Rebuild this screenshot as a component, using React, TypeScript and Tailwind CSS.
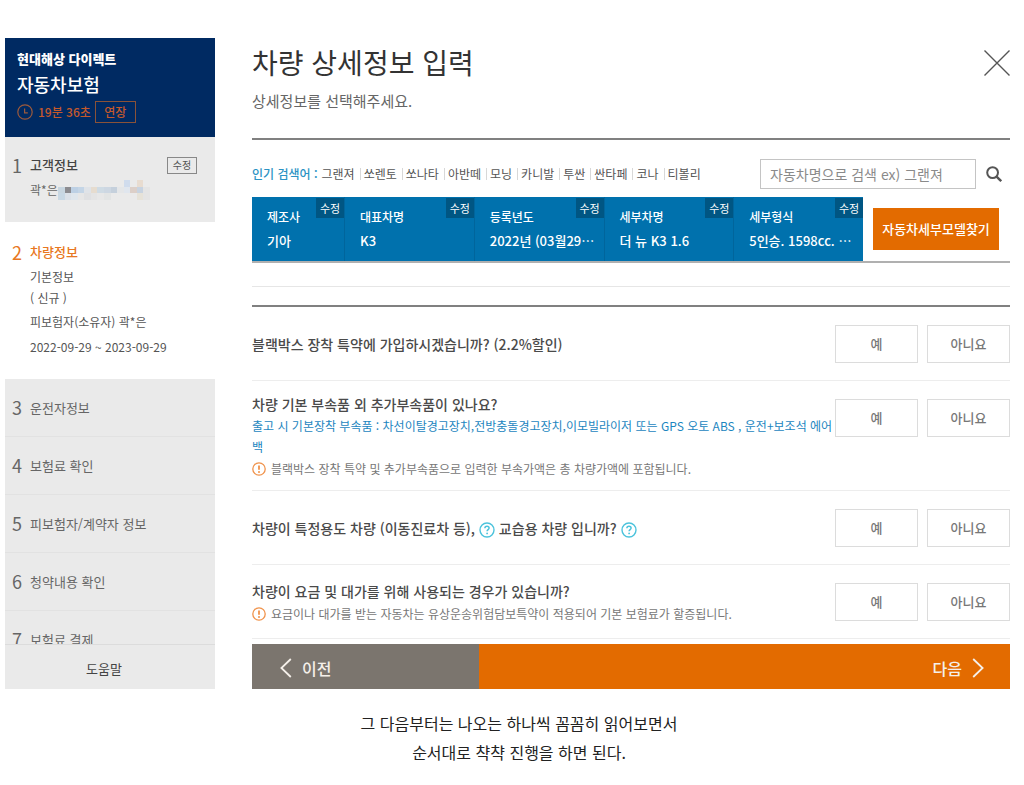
import React, { useState } from 'react';

const popular = ['그랜져', '쏘렌토', '쏘나타', '아반떼', '모닝', '카니발', '투싼', '싼타페', '코나', '티볼리'];

const specs = [
  { label: '제조사', value: '기아' },
  { label: '대표차명', value: 'K3' },
  { label: '등록년도', value: '2022년 (03월29⋯' },
  { label: '세부차명', value: '더 뉴 K3 1.6' },
  { label: '세부형식', value: '5인승. 1598cc. ⋯' },
];

const nextSteps = [
  { no: 3, label: '운전자정보' },
  { no: 4, label: '보험료 확인' },
  { no: 5, label: '피보험자/계약자 정보' },
  { no: 6, label: '청약내용 확인' },
  { no: 7, label: '보험료 결제' },
];

// [column, row, colour] of the masked phone number
const mask: [number, number, string][] = [
  [10, 0, '#d0dced'], [12, 0, '#e8dcd0'],
  [0, 1, '#c8d6e0'], [1, 1, '#8c8c90'], [2, 1, '#bdd0e4'], [3, 1, '#c4d5e6'], [4, 1, '#dfe3e8'],
  [5, 1, '#e6dccf'], [6, 1, '#cfdbe4'], [7, 1, '#cdd7e2'], [8, 1, '#c5d0dc'], [9, 1, '#e4e6e8'],
  [10, 1, '#e0e6ee'], [11, 1, '#dccfc8'], [12, 1, '#c8d3e0'], [13, 1, '#e4e4e4'],
  [0, 2, '#c8d8e4'], [1, 2, '#dbe1e8'], [2, 2, '#dfe6ec'], [3, 2, '#e6e6e6'], [4, 2, '#dfe0e2'],
  [5, 2, '#e4e4e4'], [6, 2, '#e7e7e7'], [7, 2, '#e2e4e4'], [12, 2, '#e6e2d8'], [13, 2, '#e4e4e4'],
];

const HelpIcon = () => (
  <button type="button" aria-label="도움말 보기" className="inline-block align-middle">
    <svg viewBox="0 0 16 16" className="block w-4 h-4" fill="none" stroke="#4cc3dc">
      <circle cx="8" cy="8" r="7" strokeWidth="1.4" />
      <path d="M5.9 6.3c0-1.3.9-2.1 2.1-2.1s2.1.8 2.1 1.9c0 1.5-2 1.6-2 3.2" strokeWidth="1.5" />
      <circle cx="8.1" cy="11.4" r=".9" fill="#4cc3dc" stroke="none" />
    </svg>
  </button>
);

const Note = ({ children }: { children: React.ReactNode }) => (
  <p className="flex items-center gap-[5px] mt-[2px] text-[12px] leading-5 text-[#777]">
    <svg viewBox="0 0 14 14" className="w-[14px] h-[14px] shrink-0" fill="none" stroke="#f0924a">
      <circle cx="7" cy="7" r="6.2" strokeWidth="1.3" />
      <path d="M7 3.4v4.4" strokeWidth="1.8" />
      <circle cx="7" cy="10" r="1" fill="#f0924a" stroke="none" />
    </svg>
    <span>{children}</span>
  </p>
);

interface QuestionProps {
  title: React.ReactNode;
  children?: React.ReactNode;
}

const Question: React.FC<QuestionProps> = ({ title, children }) => {
  const [answer, setAnswer] = useState('');

  return (
    <li className="flex items-start pt-3 pb-[11px] border-b border-[#ededed]">
      <div className="flex-1 min-w-0 self-center">
        <h2 className="text-[14px] leading-[22px] font-medium text-[#4a4a4a]">{title}</h2>
        {children}
      </div>
      <div className="flex gap-[9px] py-[6px] shrink-0">
        {['예', '아니요'].map((option) => (
          <button
            key={option}
            type="button"
            aria-pressed={answer === option}
            onClick={() => setAnswer(option)}
            className="w-[83px] h-[38px] border border-[#dcdcdc] bg-white text-[13px] font-medium text-[#777]"
          >
            {option}
          </button>
        ))}
      </div>
    </li>
  );
};

const Sidebar = () => (
  <aside className="w-[210px] shrink-0 flex flex-col bg-[#eaeaea] text-[#666]">
    <div className="bg-[#002a62] text-white px-3 pt-[11px] pb-[14px]">
      <p className="text-[13px] leading-5 font-black">현대해상 다이렉트</p>
      <p className="text-[18px] leading-[30px] font-medium">자동차보험</p>
      <div className="flex items-center mt-[2px] text-[12px] font-medium text-[#c4592c]">
        <svg viewBox="0 0 16 16" className="w-4 h-4 mr-[5px]" fill="none" stroke="#9c5a3c" strokeWidth="1.2">
          <circle cx="8" cy="8" r="7.2" />
          <path d="M7.6 4.6v4.2h3.2" />
        </svg>
        <span>19분 36초</span>
        <button type="button" className="ml-1 w-[41px] h-[22px] border border-[#8a5238]">연장</button>
      </div>
    </div>

    <nav className="flex-[1_1_0px] min-h-0 overflow-hidden">
      <div className="h-[85px] pl-[7px] pr-[18px] pt-4">
        <div className="flex items-center h-6">
          <span className="w-[18px] text-[18px]">1</span>
          <a href="#customer" className="flex-1 text-[13px] font-medium text-[#444]">고객정보</a>
          <button type="button" className="w-[30px] h-[17px] border border-[#888] text-[10px] leading-[14px] text-[#555]">
            수정
          </button>
        </div>
        <div className="flex items-center h-[26px] pl-[18px] text-[12px]">
          <span>곽*은</span>
          <svg viewBox="0 0 14 3" className="w-[92px] h-5" shapeRendering="crispEdges">
            {mask.map(([x, y, fill]) => (
              <rect key={`${x}-${y}`} x={x} y={y} width="1" height="1" fill={fill} />
            ))}
          </svg>
        </div>
      </div>

      <div className="h-[157px] bg-white pl-[7px] pt-[18px] text-[12px]">
        <div className="flex items-center h-6 text-[#e87722]">
          <span className="w-[18px] text-[18px]">2</span>
          <a href="#car" className="text-[13px] font-medium">차량정보</a>
        </div>
        <div className="pl-[18px] pt-[2px] text-[#555]">
          <p className="leading-[21px]">기본정보</p>
          <p className="leading-[21px]">( 신규 )</p>
          <p className="leading-7">피보험자(소유자) 곽*은</p>
          <p className="leading-[21px]">2022-09-29 ~ 2023-09-29</p>
        </div>
      </div>

      {nextSteps.map((step) => (
        <div key={step.no} className="flex items-center h-[58px] pl-[7px] border-b border-[#e2e2e2]">
          <span className="w-[18px] text-[18px]">{step.no}</span>
          <a href={`#step${step.no}`} className="text-[13px]">{step.label}</a>
        </div>
      ))}
    </nav>

    <a href="#help" className="flex items-center justify-center h-[45px] pt-1 pr-3 border-t border-[#dcdcdc] text-[13px] text-[#444]">
      도움말
    </a>
  </aside>
);

const App = () => {
  const [keyword, setKeyword] = useState('');

  return (
    <div lang="ko" className="bg-white pt-[38px] font-['Noto_Sans_CJK_KR',sans-serif]">
      <div className="flex gap-[37px] pl-[5px] pr-[14px]">
        <Sidebar />

        <main className="flex-1 min-w-0">
          <header className="flex items-start justify-between h-[100px] pt-1">
            <div>
              <h1 className="text-[28px] leading-10 text-[#333]">차량 상세정보 입력</h1>
              <p className="mt-[7px] text-[15px] leading-6 text-[#666]">상세정보를 선택해주세요.</p>
            </div>
            <button type="button" aria-label="닫기" className="mt-2">
              <svg viewBox="0 0 26 26" className="block w-[26px] h-[26px]" stroke="#555" strokeWidth="1.4">
                <path d="M.5.5l25 25M25.5.5l-25 25" />
              </svg>
            </button>
          </header>

          <section className="border-t-2 border-[#808080] pt-[19px]">
            <div className="flex items-center justify-between">
              <div className="flex items-center text-[12px]">
                <span className="mr-1 font-medium text-[#2b93c4]">인기 검색어 :</span>
                {popular.map((name, i) => (
                  <React.Fragment key={name}>
                    {i > 0 && <span className="ml-[5px] mr-[3px] w-px h-3 bg-[#d8d8d8]" />}
                    <a href="#search" className="text-[#555]">{name}</a>
                  </React.Fragment>
                ))}
              </div>
              <form className="flex items-center gap-[10px] pr-2" onSubmit={(e) => e.preventDefault()}>
                <input
                  type="text"
                  aria-label="자동차명 검색"
                  value={keyword}
                  onChange={(e) => setKeyword(e.target.value)}
                  placeholder="자동차명으로 검색 ex) 그랜져"
                  className="w-[216px] h-[30px] px-[9px] border border-[#c4c4c4] text-[14px] text-[#444] placeholder:text-[#8a8a8a]"
                />
                <button type="submit" aria-label="검색">
                  <svg viewBox="0 0 16 16" className="block w-4 h-4" fill="none" stroke="#555">
                    <circle cx="6.6" cy="6.6" r="5.4" strokeWidth="2" />
                    <path d="M10.6 10.6l4.6 4.6" strokeWidth="2.4" />
                  </svg>
                </button>
              </form>
            </div>

            <div className="flex mt-2 border-b-2 border-[#b0b0b0]">
              <dl className="flex flex-1 min-w-0 h-[64px] bg-[#0071ad] text-white">
                {specs.map((spec, i) => (
                  <div
                    key={spec.label}
                    className={`relative pl-[15px] pt-2 border-[#00659c] ${i === 0 ? 'w-[93px]' : 'flex-1 min-w-0'} ${i < 4 ? 'border-r' : ''}`}
                  >
                    <dt className="text-[12px] leading-6 font-medium">{spec.label}</dt>
                    <dd className="text-[13px] leading-6 font-medium whitespace-nowrap">{spec.value}</dd>
                    <button type="button" className="absolute top-px right-0 w-7 h-5 bg-[#005683] text-[11px] leading-5">
                      수정
                    </button>
                  </div>
                ))}
              </dl>
              <div className="w-[147px] pl-[10px] flex items-center">
                <button type="button" className="w-[126px] h-[42px] bg-[#e36b00] text-[13px] font-medium text-white">
                  자동차세부모델찾기
                </button>
              </div>
            </div>
            <div className="mt-[23px] border-b border-[#e6e6e6]" />
          </section>

          <ul className="mt-[18px] border-t-2 border-[#808080]">
            <Question title="블랙박스 장착 특약에 가입하시겠습니까? (2.2%할인)" />
            <Question title="차량 기본 부속품 외 추가부속품이 있나요?">
              <p className="text-[12px] leading-[21px] text-[#1c86c0]">
                출고 시 기본장착 부속품 : 차선이탈경고장치,전방충돌경고장치,이모빌라이저 또는 GPS 오토 ABS , 운전+보조석 에어백
              </p>
              <Note>블랙박스 장착 특약 및 추가부속품으로 입력한 부속가액은 총 차량가액에 포함됩니다.</Note>
            </Question>
            <Question
              title={<>차량이 특정용도 차량 (이동진료차 등), <HelpIcon /> 교습용 차량 입니까? <HelpIcon /></>}
            />
            <Question title="차량이 요금 및 대가를 위해 사용되는 경우가 있습니까?">
              <Note>요금이나 대가를 받는 자동차는 유상운송위험담보특약이 적용되어 기본 보험료가 할증됩니다.</Note>
            </Question>
          </ul>

          <div className="flex h-[45px] mt-[5px] text-[16px] font-medium text-[#f5f0ea]">
            <button type="button" className="w-[30%] flex items-center gap-[10px] pl-7 pt-[2px] bg-[#7b756e]">
              <svg viewBox="0 0 12 20" className="w-3 h-5" fill="none" stroke="currentColor" strokeWidth="1.8">
                <path d="M10.8 1L1.4 10l9.4 9" />
              </svg>
              이전
            </button>
            <button type="button" className="flex-1 flex items-center justify-end gap-[10px] pr-[26px] pt-[2px] bg-[#e36b00]">
              다음
              <svg viewBox="0 0 12 20" className="w-3 h-5" fill="none" stroke="currentColor" strokeWidth="1.8">
                <path d="M1.2 1l9.4 9-9.4 9" />
              </svg>
            </button>
          </div>
        </main>
      </div>

      <p className="mt-5 pl-[14px] text-center text-[16px] leading-[29px] text-[#222]">
        그 다음부터는 나오는 하나씩 꼼꼼히 읽어보면서
        <br />
        순서대로 챡챡 진행을 하면 된다.
      </p>
    </div>
  );
};

export default App;
